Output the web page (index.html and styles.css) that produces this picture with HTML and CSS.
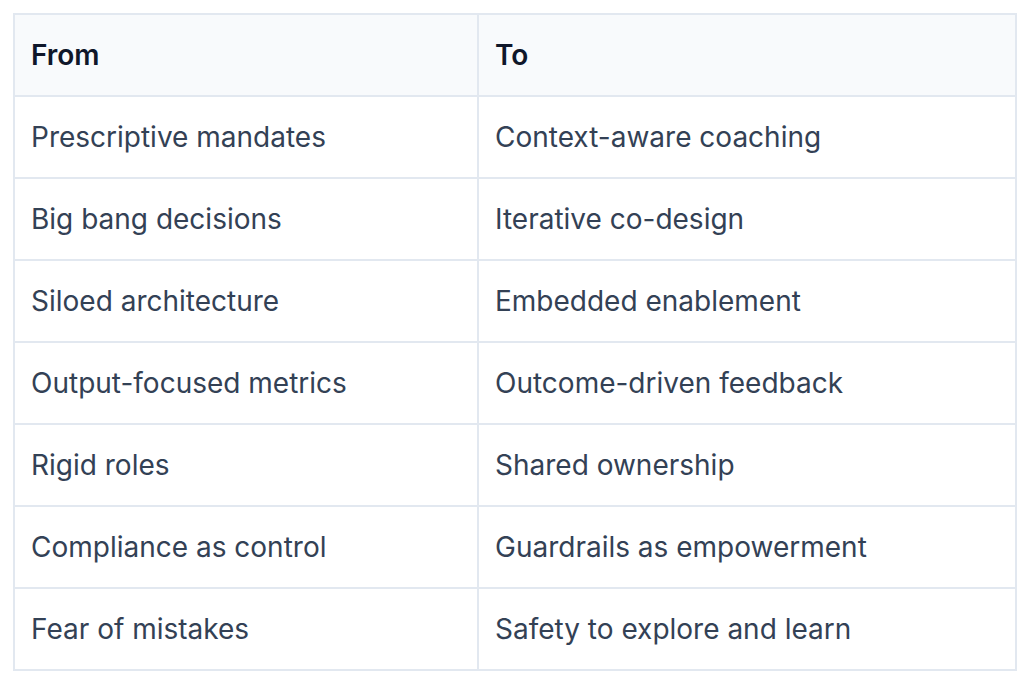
FILE: index.html
```html
<!DOCTYPE html>
<html lang="en">
<head>
<meta charset="utf-8">
<link rel="stylesheet" href="styles.css">
</head>
<body>
<table class="shift">
  <colgroup><col class="c1"><col class="c2"></colgroup>
  <thead>
    <tr><th>From</th><th>To</th></tr>
  </thead>
  <tbody>
    <tr><td>Prescriptive mandates</td><td>Context-aware coaching</td></tr>
    <tr><td>Big bang decisions</td><td>Iterative co-design</td></tr>
    <tr><td>Siloed architecture</td><td>Embedded enablement</td></tr>
    <tr><td>Output-focused metrics</td><td>Outcome-driven feedback</td></tr>
    <tr><td>Rigid roles</td><td>Shared ownership</td></tr>
    <tr><td>Compliance as control</td><td>Guardrails as empowerment</td></tr>
    <tr><td>Fear of mistakes</td><td>Safety to explore and learn</td></tr>
  </tbody>
</table>
</body>
</html>
```
FILE: styles.css
```css
html, body { margin: 0; padding: 0; background: #ffffff; }
body { padding: 13px; font-family: Inter, "Liberation Sans", sans-serif; }
.shift {
  width: 1002px;
  border-collapse: collapse;
  table-layout: fixed;
  border: 2px solid #e2e8f0;
}
.c1 { width: 464px; }
.c2 { width: 538px; }
.shift th, .shift td {
  border: 2px solid #e2e8f0;
  height: 82px;
  padding: 0 16px;
  text-align: left;
  vertical-align: middle;
  font-size: 28px;
  line-height: 40px;
  box-sizing: border-box;
}
.shift th {
  background: #f8fafc;
  color: #0f172a;
  font-weight: 600;
}
.shift td { color: #334155; font-weight: 400; }
```
